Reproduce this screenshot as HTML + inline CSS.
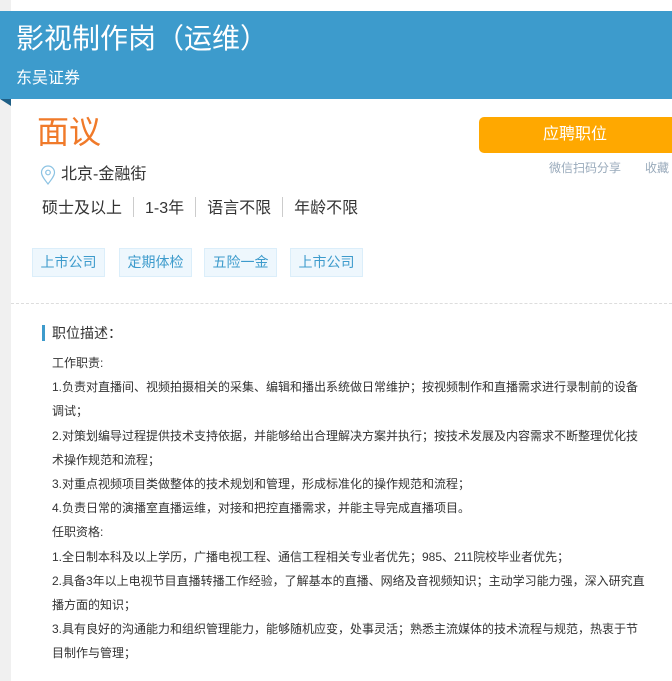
<!DOCTYPE html>
<html><head><meta charset="utf-8"><style>
*{margin:0;padding:0;box-sizing:border-box}
body{width:672px;height:681px;overflow:hidden;background:#fff;font-family:"Liberation Sans","Noto Sans CJK SC",sans-serif;position:relative}
.strip{position:absolute;left:0;top:0;width:11px;height:681px;background:#f0f0f0}
.hdr{position:absolute;left:0;top:11px;width:672px;height:88px;background:#3d9bcc;color:#fff}
.tri{position:absolute;left:0;top:99px;width:0;height:0;border-top:7px solid #1f5f86;border-left:11px solid transparent}
.abs{position:absolute;white-space:nowrap}
.tag{position:absolute;top:248px;height:29px;width:73px;background:#eef7fd;border:1px solid #dbeefa;color:#3d9bcc;font-size:14px;line-height:27px;text-align:center}
.desc{position:absolute;left:52px;top:351px;width:597px;font-size:12px;line-height:24.2px;color:#333}
.sep{display:inline-block;width:1px;height:20px;background:#ccc;vertical-align:-4px;margin:0 11px}
</style></head><body>
<div class="strip"></div>
<div class="hdr">
<div class="abs" style="left:16px;top:12px;font-size:28px;line-height:32px">影视制作岗（运维）</div>
<div class="abs" style="left:16px;top:58px;font-size:16px;line-height:20px">东吴证券</div>
</div>
<div class="tri"></div>
<div class="abs" style="left:37px;top:113px;font-size:32px;line-height:38px;color:#f07a2a">面议</div>
<div class="abs" style="left:479px;top:117px;width:200px;height:36px;background:#ffa800;border-radius:5px;color:#fff;font-size:16px;line-height:36px;padding-left:64px">应聘职位</div>
<div class="abs" style="left:549px;top:160px;font-size:12px;color:#9ab;line-height:16px">微信扫码分享</div>
<div class="abs" style="left:645px;top:160px;font-size:12px;color:#9ab;line-height:16px">收藏</div>
<svg class="abs" style="left:40px;top:165px" width="16" height="20" viewBox="0 0 16 20"><path d="M8 19C4 14 1.5 10.5 1.5 7.5A6.5 6.5 0 0 1 14.5 7.5C14.5 10.5 12 14 8 19Z" fill="none" stroke="#8cc3e3" stroke-width="1.2"/><circle cx="8" cy="7.5" r="2.3" fill="none" stroke="#8cc3e3" stroke-width="1.2"/></svg>
<div class="abs" style="left:61px;top:165px;font-size:16px;line-height:20px;color:#333">北京-金融街</div>
<div class="abs" style="left:42px;top:197px;font-size:16px;line-height:22px;color:#333">硕士及以上<span class="sep"></span>1-3年<span class="sep"></span>语言不限<span class="sep"></span>年龄不限</div>
<div class="tag" style="left:32px">上市公司</div>
<div class="tag" style="left:119px">定期体检</div>
<div class="tag" style="left:204px">五险一金</div>
<div class="tag" style="left:290px">上市公司</div>
<div class="abs" style="left:11px;top:303px;width:661px;border-top:1px dashed #ddd"></div>
<div class="abs" style="left:42px;top:325px;width:3px;height:16px;background:#3d9bcc"></div>
<div class="abs" style="left:52px;top:324px;font-size:14px;line-height:18px;color:#333">职位描述：</div>
<div class="desc">工作职责:<br>1.负责对直播间、视频拍摄相关的采集、编辑和播出系统做日常维护；按视频制作和直播需求进行录制前的设备<br>调试；<br>2.对策划编导过程提供技术支持依据，并能够给出合理解决方案并执行；按技术发展及内容需求不断整理优化技<br>术操作规范和流程；<br>3.对重点视频项目类做整体的技术规划和管理，形成标准化的操作规范和流程；<br>4.负责日常的演播室直播运维，对接和把控直播需求，并能主导完成直播项目。<br>任职资格:<br>1.全日制本科及以上学历，广播电视工程、通信工程相关专业者优先；985、211院校毕业者优先；<br>2.具备3年以上电视节目直播转播工作经验，了解基本的直播、网络及音视频知识；主动学习能力强，深入研究直<br>播方面的知识；<br>3.具有良好的沟通能力和组织管理能力，能够随机应变，处事灵活；熟悉主流媒体的技术流程与规范，热衷于节<br>目制作与管理；</div>
</body></html>
